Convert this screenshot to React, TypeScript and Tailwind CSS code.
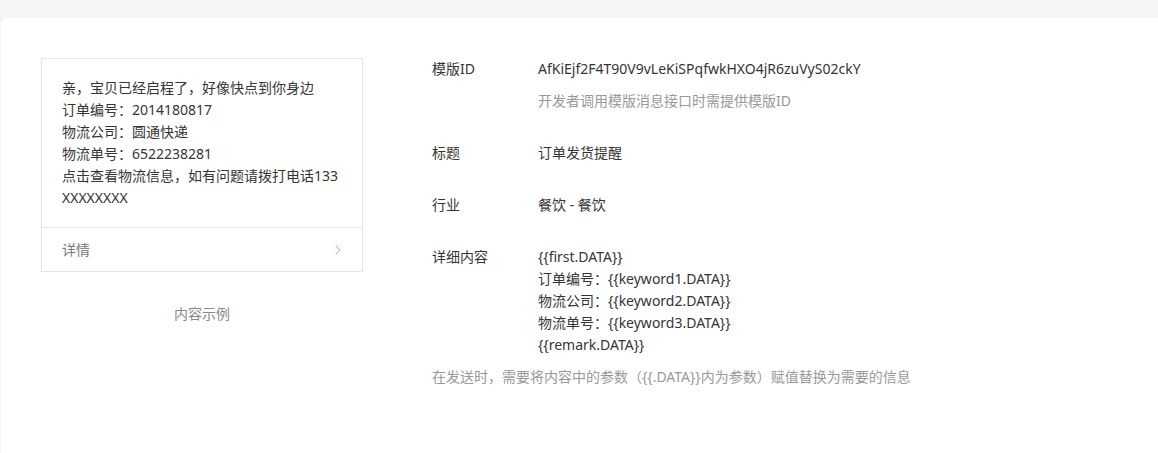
import { ChevronRight } from 'lucide-react'

const font = { fontFamily: '"Noto Sans", "Noto Sans CJK SC", sans-serif' }

const rows = [
  { label: '标题', value: '订单发货提醒' },
  { label: '行业', value: '餐饮 - 餐饮' },
]

const detailLines = [
  '{{first.DATA}}',
  '订单编号：{{keyword1.DATA}}',
  '物流公司：{{keyword2.DATA}}',
  '物流单号：{{keyword3.DATA}}',
  '{{remark.DATA}}',
]

function Preview() {
  return (
    <div className="w-[322px] shrink-0">
      <div className="border border-[#e4e5e7] bg-white">
        <div className="px-5 pt-[18px] pb-[18px] text-sm leading-[22px] text-[#353535] break-all">
          <p>亲，宝贝已经启程了，好像快点到你身边</p>
          <p>订单编号：2014180817</p>
          <p>物流公司：圆通快递</p>
          <p>物流单号：6522238281</p>
          <p>点击查看物流信息，如有问题请拨打电话133XXXXXXXX</p>
        </div>
        <div className="flex items-center justify-between border-t border-[#e4e5e7] px-5 h-11 text-sm text-[#777]">
          <span>详情</span>
          <ChevronRight className="w-4 h-4 text-[#aaa] -mr-1" strokeWidth={1.5} />
        </div>
      </div>
      <p className="mt-[31px] text-center text-sm leading-[22px] text-[#888]">内容示例</p>
    </div>
  )
}

export default function App() {
  return (
    <div className="min-h-[453px] bg-[#f4f5f7] pt-[18px] pl-px" style={font}>
      <div className="min-h-[435px] rounded-tl-md bg-white p-10">
        <div className="flex gap-[69px]">
          <Preview />
          <div className="text-sm leading-[22px] text-[#353535]">
            <div className="flex">
              <span className="w-[106px] shrink-0">模版ID</span>
              <div>
                <p>AfKiEjf2F4T90V9vLeKiSPqfwkHXO4jR6zuVyS02ckY</p>
                <p className="mt-[10px] text-[#999]">开发者调用模版消息接口时需提供模版ID</p>
              </div>
            </div>
            {rows.map(r => (
              <div key={r.label} className="flex mt-[30px]">
                <span className="w-[106px] shrink-0">{r.label}</span>
                <span>{r.value}</span>
              </div>
            ))}
            <div className="flex mt-[30px]">
              <span className="w-[106px] shrink-0">详细内容</span>
              <div>
                {detailLines.map(l => (
                  <p key={l}>{l}</p>
                ))}
              </div>
            </div>
            <p className="mt-[10px] text-[#999]">在发送时，需要将内容中的参数（{'{{.DATA}}'}内为参数）赋值替换为需要的信息</p>
          </div>
        </div>
      </div>
    </div>
  )
}
